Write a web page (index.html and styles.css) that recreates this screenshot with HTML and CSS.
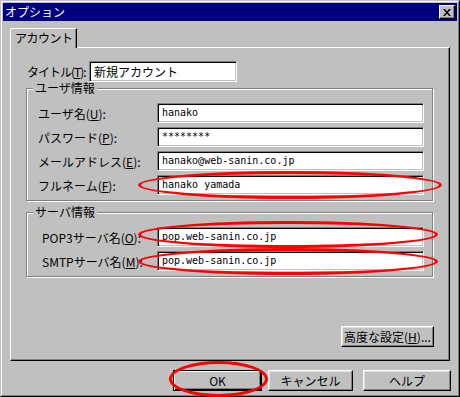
FILE: index.html
```html
<!DOCTYPE html>
<html lang="ja">
<head>
<meta charset="utf-8">
<title>オプション</title>
<link rel="stylesheet" href="styles.css">
</head>
<body>
<div class="window">
  <div class="frame">
    <div class="titlebar">
      <span class="title">オプション</span>
      <button class="close" type="button" aria-label="閉じる">
        <svg width="8" height="7" viewBox="0 0 8 7"><path d="M0 0h2l2 2.5L6 0h2L5 3.5 8 7H6L4 4.5 2 7H0l3-3.5z" fill="#000"/></svg>
      </button>
    </div>
    <div class="body">
      <div class="tabs"><div class="tab">アカウント</div></div>
      <div class="panel">
        <div class="title-row">
          <span class="label">タイトル(<u>T</u>):</span>
          <div class="field field-title">新規アカウント</div>
        </div>
        <div class="group">
          <div class="group-title">ユーザ情報</div>
          <div class="rows">
            <div class="row"><span class="label">ユーザ名(<u>U</u>):</span><div class="field mono">hanako</div></div>
            <div class="row"><span class="label">パスワード(<u>P</u>):</span><div class="field mono">********</div></div>
            <div class="row"><span class="label">メールアドレス(<u>E</u>):</span><div class="field mono">hanako@web-sanin.co.jp</div></div>
            <div class="row"><span class="label">フルネーム(<u>F</u>):</span><div class="field mono">hanako yamada</div></div>
          </div>
        </div>
        <div class="group group-server">
          <div class="group-title">サーバ情報</div>
          <div class="rows">
            <div class="row"><span class="label">POP3サーバ名(<u>O</u>):</span><div class="field mono">pop.web-sanin.co.jp</div></div>
            <div class="row"><span class="label">SMTPサーバ名(<u>M</u>):</span><div class="field mono">pop.web-sanin.co.jp</div></div>
          </div>
        </div>
        <div class="adv-row">
          <button class="btn btn-adv" type="button">高度な設定(<u>H</u>)...</button>
        </div>
      </div>
      <div class="buttons">
        <button class="btn btn-ok" type="button">OK</button>
        <button class="btn btn-cancel" type="button">キャンセル</button>
        <button class="btn btn-help" type="button">ヘルプ</button>
      </div>
    </div>
  </div>
  <div class="mark mark-name"></div>
  <div class="mark mark-pop"></div>
  <div class="mark mark-smtp"></div>
  <div class="mark mark-ok"></div>
</div>
</body>
</html>
```

FILE: styles.css
```css
* { box-sizing: border-box; }

html, body {
  margin: 0;
  padding: 0;
  background: #c0c0c0;
}

body {
  font-family: "Noto Sans CJK JP", "Noto Sans CJK SC", sans-serif;
  font-size: 12px;
  color: #000;
}

.window {
  position: relative;
  width: 460px;
  height: 397px;
  border: 1px solid;
  border-color: #c0c0c0 #000 #000 #c0c0c0;
  background: #c0c0c0;
}

.frame {
  height: 100%;
  border: 1px solid;
  border-color: #fff #808080 #808080 #fff;
  padding: 1px;
}

.titlebar {
  height: 18px;
  background: #000080;
  display: flex;
  align-items: center;
  justify-content: space-between;
  padding: 0 2px 0 2px;
}

.title {
  color: #fff;
  font-size: 12px;
  line-height: 14px;
  white-space: nowrap;
}

.close {
  width: 16px;
  height: 14px;
  padding: 0;
  margin: 0;
  display: flex;
  align-items: center;
  justify-content: center;
  background: #c0c0c0;
  border: 1px solid;
  border-color: #fff #000 #000 #fff;
  box-shadow: inset -1px -1px 0 #808080;
}

.close svg { display: block; }

.body {
  padding: 7px 0 0 7px;
}

.tabs {
  display: flex;
  height: 19px;
}

.tab {
  position: relative;
  z-index: 1;
  width: 67px;
  height: 20px;
  background: #c0c0c0;
  border: 1px solid;
  border-color: #fff #000 transparent #fff;
  border-bottom: none;
  border-top-left-radius: 2px;
  box-shadow: inset -1px 0 0 #808080;
  padding-left: 4px;
  line-height: 17px;
  white-space: nowrap;
  letter-spacing: -0.5px;
}

.panel {
  width: 440px;
  height: 314px;
  border: 1px solid;
  border-color: #fff #000 #000 #fff;
  box-shadow: inset -1px -1px 0 #808080;
  padding: 13px 0 0 15px;
}

.label {
  flex: none;
  white-space: nowrap;
}

.title-row {
  display: flex;
  align-items: center;
  height: 21px;
}

.title-row .label {
  width: 63px;
  padding-left: 1px;
  letter-spacing: -1px;
}

.field {
  flex: none;
  height: 20px;
  background: #fff;
  border: 1px solid;
  border-color: #808080 #fff #fff #808080;
  box-shadow: inset 1px 1px 0 #000, inset -1px -1px 0 #c0c0c0;
  padding-left: 4px;
  line-height: 18px;
  white-space: pre;
}

.field-title {
  width: 148px;
  height: 21px;
  line-height: 19px;
}

.mono {
  font-family: "DejaVu Sans Mono", "Liberation Mono", monospace;
  font-size: 10px;
}

.group {
  width: 407px;
  margin-top: 6px;
  border: 1px solid #808080;
  box-shadow: inset 1px 1px 0 #fff, 1px 1px 0 #fff;
  padding-bottom: 5px;
}

.group-server {
  margin-top: 11px;
}

.group-title {
  width: fit-content;
  margin: -8px 0 0 6px;
  padding: 0 2px;
  line-height: 14px;
  background: #c0c0c0;
  white-space: nowrap;
}

.rows {
  display: flex;
  flex-direction: column;
  gap: 4px;
  margin-top: 8px;
}

.row {
  display: flex;
  align-items: center;
}

.row .label {
  width: 130px;
  padding-left: 11px;
}

.group-server .row .label {
  padding-left: 15px;
}

.row .field {
  width: 267px;
}

.adv-row {
  width: 408px;
  display: flex;
  justify-content: flex-end;
  margin-top: 49px;
}

.btn {
  font-family: inherit;
  font-size: 12px;
  color: #000;
  background: #c0c0c0;
  border: 1px solid;
  border-color: #fff #000 #000 #fff;
  box-shadow: inset -1px -1px 0 #808080, inset 1px 1px 0 #dfdfdf;
  padding: 0;
  margin: 0;
  height: 21px;
  line-height: 18px;
  white-space: nowrap;
}

.btn-adv {
  width: 93px;
}

.buttons {
  display: flex;
  justify-content: flex-end;
  padding: 9px 6px 0 0;
}

.btn-ok {
  width: 89px;
  border: 1px solid #000;
  box-shadow: inset 1px 1px 0 #fff, inset -1px -1px 0 #000, inset -2px -2px 0 #808080;
  margin-right: 6px;
}

.btn-cancel {
  width: 85px;
  margin-right: 10px;
}

.btn-help {
  width: 88px;
}

.mark {
  position: absolute;
  border: 3px solid #f00;
  border-radius: 50%;
  pointer-events: none;
}

.mark-name { left: 137px; top: 170px; width: 304px; height: 28px; }
.mark-pop { left: 137px; top: 220px; width: 300px; height: 27px; }
.mark-smtp { left: 137px; top: 247px; width: 300px; height: 27px; }
.mark-ok { left: 168px; top: 360px; width: 99px; height: 36px; }
```
